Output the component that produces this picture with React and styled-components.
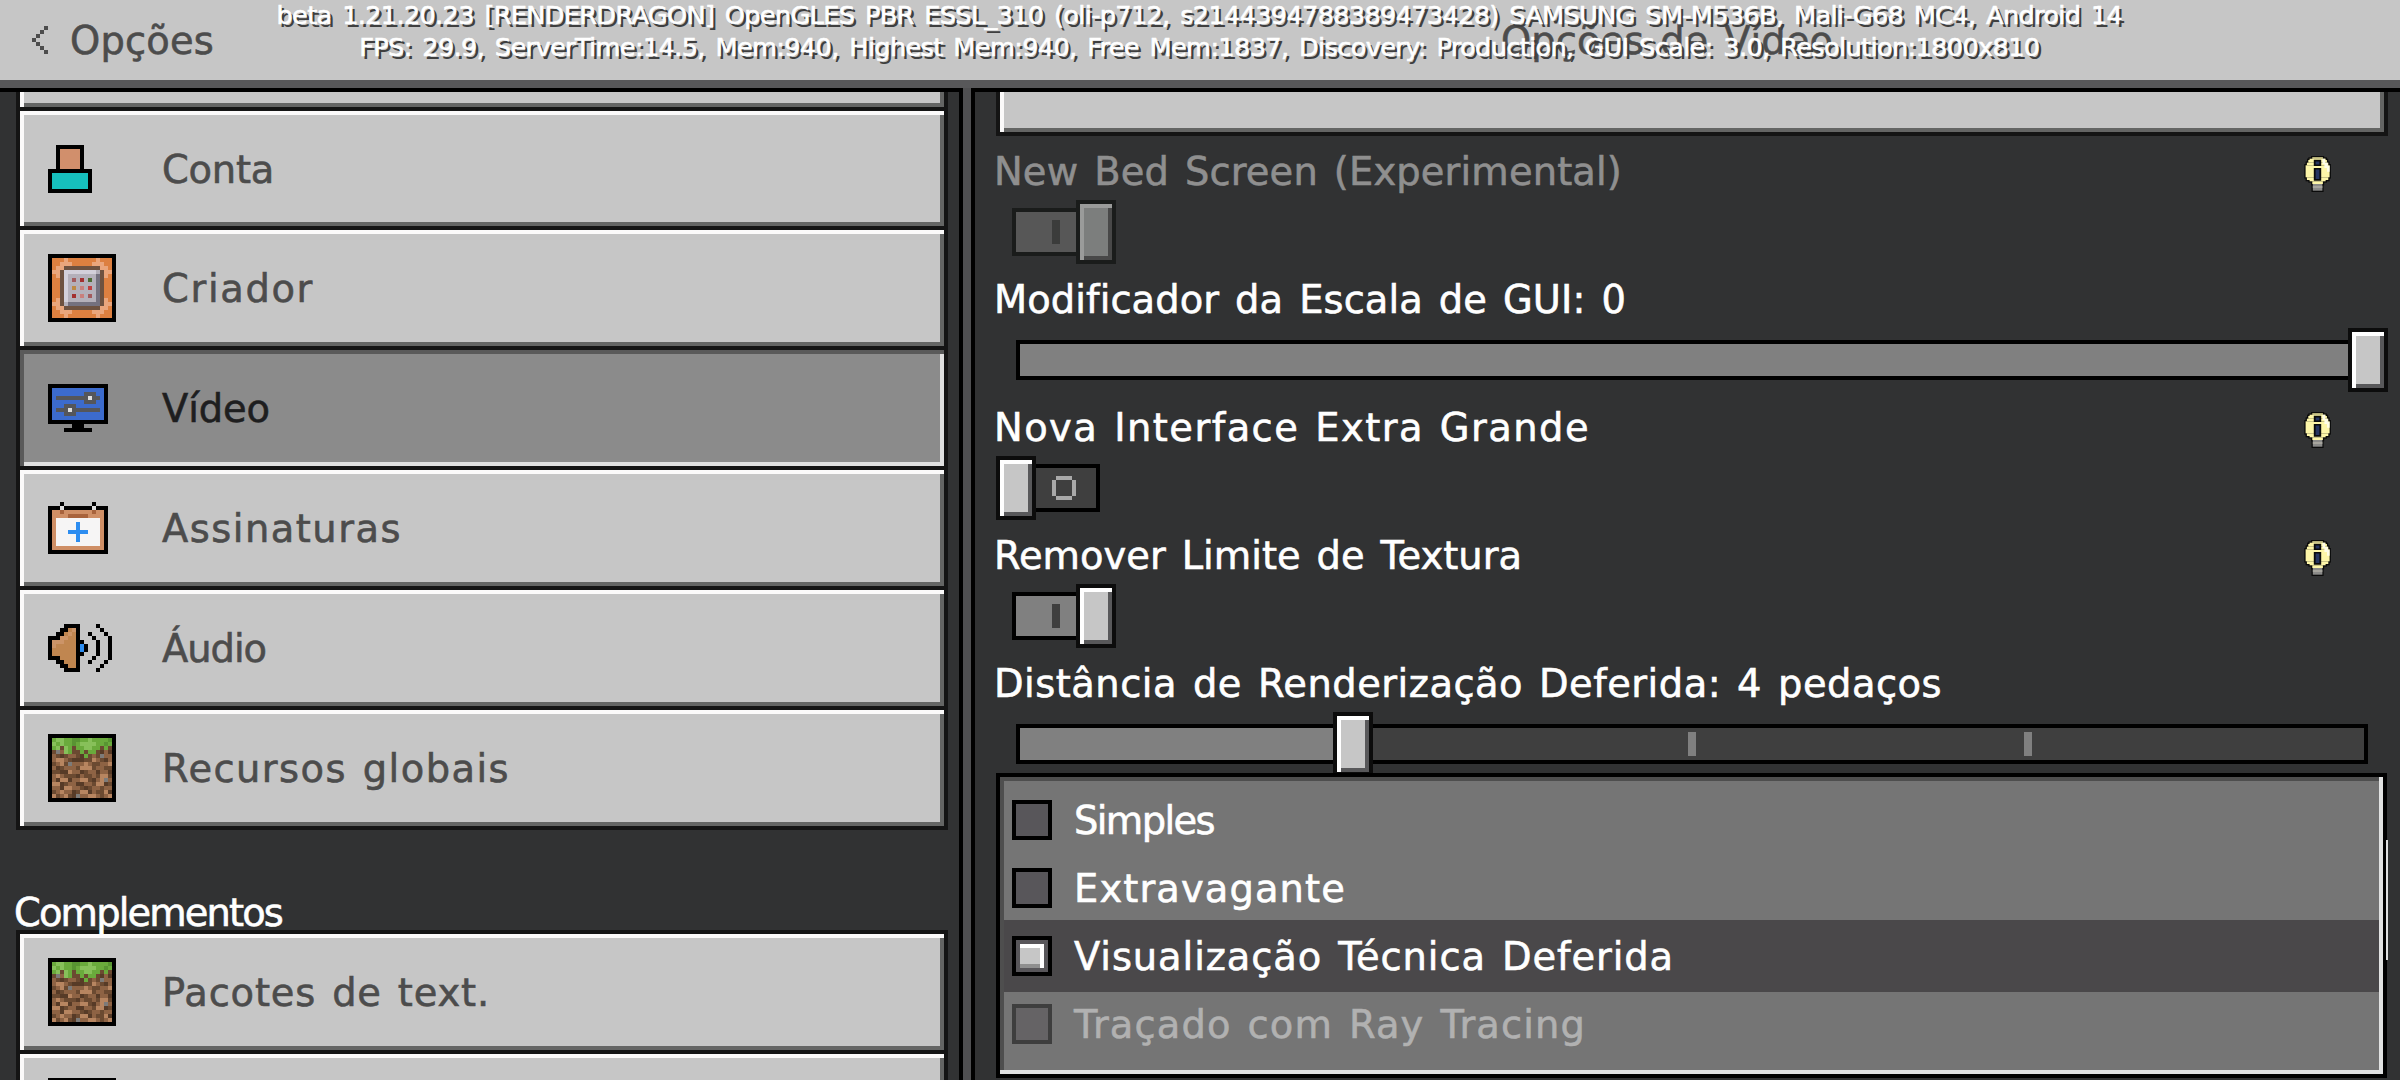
import React, { useLayoutEffect, useRef } from 'react'
import styled, { createGlobalStyle, css } from 'styled-components'

const GlobalStyle = createGlobalStyle`
  * {
    box-sizing: border-box;
  }
  body {
    margin: 0;
    background: #313233;
    font-family: 'DejaVu Sans', sans-serif;
    overflow: hidden;
  }
`

/* ---------- text ---------- */

// glyph advances of the game font, in font pixels. Everything else is 6 wide
const ADVANCES = {
  ' ': 4, i: 2, l: 3, t: 4, f: 5, k: 5, I: 4, 'í': 3,
  '.': 2, ',': 2, ':': 2, '[': 4, ']': 4, '(': 5, ')': 5,
}

const Label = styled.span`
  display: inline-block;
  justify-self: start;
  white-space: pre;
  margin-left: ${(props) => props.$unit * -0.5}px;
  padding-top: ${(props) => props.$unit * 0.5}px;
  font-size: ${(props) => props.$unit * 9.6}px;
  line-height: ${(props) => props.$unit * 10}px;
  color: ${(props) => props.color || '#fff'};
  -webkit-text-stroke: 0.6px ${(props) => props.color || '#fff'};
  ${(props) => props.$shadow && css`
    text-shadow: 2.67px 2.67px 0 #3f3f3f;
  `}
`

function GameText({ children, unit = 4, ...rest }) {
  const ref = useRef(null)

  useLayoutEffect(() => {
    const el = ref.current
    el.style.letterSpacing = '0px'
    el.style.wordSpacing = '0px'
    const chars = [...children]
    const spaces = chars.filter((c) => c === ' ').length
    const target = chars.reduce((sum, c) => sum + (ADVANCES[c] || 6), 0) * unit
    const natural = el.getBoundingClientRect().width
    const space = unit * 9.6 * 0.318
    const tracking =
      (target - natural - spaces * (4 * unit - space)) / (chars.length - spaces)
    el.style.letterSpacing = `${tracking}px`
    el.style.wordSpacing = `${4 * unit - space - tracking}px`
  }, [children, unit])

  return <Label ref={ref} $unit={unit} {...rest}>{children}</Label>
}

/* ---------- pixel icons ---------- */

const PALETTE = {
  K: '#000', S: '#d18f6c', T: '#16bfbd',
  O: '#dd8040', o: '#eaa67c', n: '#6e5240', L: '#d3d0da', M: '#b4b0ba', D: '#74717f',
  r: '#a33030', p: '#c97f7c', c: '#a25a5c', q: '#bf4040', v: '#4e6b35', y: '#bd8a44',
  B: '#3c6bcd', g: '#55565a', w: '#dedede',
  A: '#cf8f66', a: '#a8633c', W: '#f6f5f5', P: '#2d8df0', x: '#a9a9a9',
  C: '#c08650', H: '#cc9468',
  1: '#6aaa3c', 2: '#87c05a', 3: '#589432',
  4: '#8e6344', 5: '#6b4a31', 6: '#b78560', 7: '#573b27', 8: '#7d7b79',
}

const ACCOUNT = [
  '..KKKKKKK..',
  '..KSSSSSK..',
  '..KSSSSSK..',
  '..KSSSSSK..',
  '..KSSSSSK..',
  '..KSSSSSK..',
  'KKKKKKKKKKK',
  'KTTTTTTTTTK',
  'KTTTTTTTTTK',
  'KTTTTTTTTTK',
  'KTTTTTTTTTK',
  'KKKKKKKKKKK',
]

const CREATOR = [
  'KKKKKKKKKKKKKKKKK',
  'KOOOoOOOOOOOoOOOK',
  'KOOoooOOOOOoooOOK',
  'KOoonnnnnnnnnooOK',
  'KoonLLLLLLLLMnooK',
  'KOonLMMMMMMMDnoOK',
  'KOOnLMcMrMvMDnOOK',
  'KOOnLMMMMMMMDnOOK',
  'KOOnLMyMpMqMDnOOK',
  'KOOnLMMMMMMMDnOOK',
  'KOOnLMrMpMcMDnOOK',
  'KOonLMMMMMMMDnoOK',
  'KoonMDDDDDDDDnooK',
  'KOoonnnnnnnnnooOK',
  'KOOoooOOOOOoooOOK',
  'KOOOoOOOOOOOoOOOK',
  'KKKKKKKKKKKKKKKKK',
]

const VIDEO = [
  'KKKKKKKKKKKKKKK',
  'KBBBBBBBBBBBBBK',
  'KBBBBBBBBgggBBK',
  'KBggggggggwggBK',
  'KBBBBBBBBgggBBK',
  'KBBBgggBBBBBBBK',
  'KBgggwgggggggBK',
  'KBBBgggBBBBBBBK',
  'KBBBBBBBBBBBBBK',
  'KKKKKKKKKKKKKKK',
  '......KKK......',
  '....KKKKKKK....',
]

const CALENDAR = [
  '...K.......K...',
  'KKKwKKKKKKKwKKK',
  'KAAaAAAAAAAaAAK',
  'KAAAAaaaaaAAAAK',
  'KAWWWWWWWWWWWAK',
  'KAWWWWWPWWWWWAK',
  'KAWWWWWPWWWWWAK',
  'KAWWWPPPPPWWWAK',
  'KAWWWWWPWWWWWAK',
  'KAWWWWWPWWWWWAK',
  'KAWWWWWWWWWWWAK',
  'KAAAAAAAAAAAAAK',
  'KKKKKKKKKKKKKKK',
]

const AUDIO = [
  '....KKKK....K...',
  '...KKCHK.....K..',
  '..KKCHCK..K...K.',
  'KKKHHCCK...K...K',
  'KHHHCCCKK...K..K',
  'KHCCCCCKPK..K..K',
  'KCCCCCCKPK..K..K',
  'KCCCCCCKK...K..K',
  'KKKCCCCK...K...K',
  '..KKCCCK..K...K.',
  '...KKCCK.....K..',
  '....KKKK....K...',
]

const GRASS = [
  'KKKKKKKKKKKKKKKKK',
  'K122113311211113K',
  'K212113122221131K',
  'K125215112211515K',
  'K584215515115747K',
  'K457544571545844K',
  'K466457775564574K',
  'K546584446455446K',
  'K475444566654455K',
  'K557764475447447K',
  'K464555745545665K',
  'K476674466574684K',
  'K667544774456675K',
  'K447664457544544K',
  'K546447566745567K',
  'K654657844664546K',
  'KKKKKKKKKKKKKKKKK',
]

const PixelSvg = styled.svg`
  display: block;
  flex: none;
  shape-rendering: crispEdges;
`

function PixelIcon({ rows, unit = 4 }) {
  const w = rows[0].length
  const h = rows.length
  return (
    <PixelSvg width={w * unit} height={h * unit} viewBox={`0 0 ${w} ${h}`}>
      {rows.map((row, y) =>
        [...row].map((c, x) =>
          c === '.' ? null : (
            <rect key={`${x}-${y}`} x={x} y={y} width="1" height="1" fill={PALETTE[c]} />
          )
        )
      )}
    </PixelSvg>
  )
}

// [top, bottom, half width] slices of the bulb glass
const GLASS = [
  [1.3, 2.7, 5.3], [2.7, 4, 8], [4, 6.7, 9.3], [6.7, 9.3, 10.7],
  [9.3, 21.3, 12], [21.3, 24, 10.7], [24, 25.3, 8], [25.3, 28, 5.3],
]

function BulbIcon() {
  return (
    <svg width="28" height="36" viewBox="0 0 28 36">
      {GLASS.map(([top, bottom, half]) => (
        <rect key={top} x={12.3 - half} y={top - 1.3} width={half * 2 + 2.6} height={bottom - top + 2.6} fill="#0b0b0b" />
      ))}
      <path d="M7.500 27h12.100v9H7.500z" fill="#0b0b0b" />
      {GLASS.map(([top, bottom, half]) => (
        <rect key={top} x={13.6 - half} y={top} width={half * 2} height={bottom - top} fill="#fdf6a8" />
      ))}
      <path d="M18.500 2.700h2.600v4h2.700v3h1.800v6h-2.600V12h-2.600V8h-1.900z" fill="#fffde8" />
      <path d="M8.800 28h9.600v6.700H8.800z" fill="#8a8a88" />
      <path d="M8.800 30.200h9.600v1.600H8.800z" fill="#aeaca4" />
      <path d="M9.800 3.800h7.400V10H9.800zM9.800 12h7.400v12.700H9.800z" fill="#0b0b0b" />
      <path d="M11.600 5.500h3.800v3h-3.800zM11.600 13.600h3.800v9.500h-3.800z" fill="#263560" />
    </svg>
  )
}

/* ---------- header ---------- */

const Screen = styled.div`
  position: relative;
  display: flex;
  flex-direction: column;
  width: 2400px;
  height: 1080px;
  overflow: hidden;
  background: #313233;
`

const Header = styled.header`
  display: grid;
  grid-template-columns: 1503px 1fr;
  align-items: center;
  flex: none;
  height: 88px;
  background: #c6c6c6;
  border-bottom: 8px solid #58585a;
`

const BackButton = styled.div`
  display: flex;
  align-items: center;
  gap: 24px;
  padding-left: 32px;
`

// the debug lines float over the header
const DebugOverlay = styled.div`
  position: absolute;
  top: 1px;
  left: 0;
  width: 100%;
  display: flex;
  flex-direction: column;
  align-items: center;
  gap: 4px;
`

/* ---------- panes ---------- */

const Panes = styled.main`
  display: flex;
  gap: 8px;
  flex: 1;
  min-height: 0;
  background: #4f4f51;
`

const Sidebar = styled.nav`
  width: 963px;
  padding: 0 11px 0 16px;
  border: solid #000;
  border-width: 4px 4px 0 0;
  background: #313233;
  overflow: hidden;
`

const Content = styled.section`
  flex: 1;
  padding: 0 12px 0 21px;
  border: solid #000;
  border-width: 4px 0 0 4px;
  background: #313233;
  overflow: hidden;
`

const raised = css`
  background: #c6c6c6;
  box-shadow: inset 4px 4px #fbfafa, inset -4px -4px #646564;
`

const sunken = css`
  background: #8b8b8b;
  box-shadow: inset 4px 4px #5a5a5a, inset -4px -4px #e0e0e0;
`

const NavList = styled.div`
  display: flex;
  flex-direction: column;
  gap: 4px;
  width: 932px;
  padding: ${(props) => (props.$cut ? '0 4px 4px' : '4px')};
  background: #141414;
`

const NavRow = styled.div`
  display: flex;
  align-items: center;
  height: ${(props) => props.$height || 116}px;
  padding-left: 28px;
  ${(props) => (props.$active ? sunken : raised)}
`

const NavIcon = styled.div`
  width: 116px;
`

// end of an entry that is scrolled under the header
const CutRow = styled.div`
  height: ${(props) => props.$height}px;
  background: #c6c6c6;
  box-shadow: inset 4px 0 #fbfafa, inset -4px -4px #646564;
`

const SectionTitle = styled.div`
  height: 100px;
  padding-top: 61px;
`

/* ---------- options ---------- */

const CutButton = styled.div`
  width: 1392px;
  height: 44px;
  padding: 0 4px 4px;
  background: #141414;
`

const Option = styled.div`
  height: 128px;
`

const OptionHead = styled.div`
  display: flex;
  justify-content: space-between;
  height: 44px;
  padding-right: 56px;
`

const OptionList = styled.div`
  padding-top: 20px;
`

const OptionLabel = styled(GameText)`
  margin-top: -6px;
`

const Knob = styled.div`
  flex: none;
  width: 40px;
  height: 64px;
  border: 4px solid ${(props) => (props.$disabled ? '#1a1c1b' : '#0c0c0c')};
  background: ${(props) => (props.$disabled ? '#7c7e7d' : '#c6c6c6')};
  box-shadow: ${(props) =>
    props.$disabled
      ? 'inset 4px 4px #9a9b9a, inset -4px -4px #484848'
      : 'inset 4px 4px #fff, inset -4px -4px #58585a'};
`

const ToggleBox = styled.div`
  display: flex;
  align-items: center;
  padding-left: ${(props) => (props.$on ? 16 : 0)}px;
`

const ToggleTrack = styled.div`
  width: 64px;
  height: 48px;
  padding: 8px 0 0 ${(props) => (props.$on ? 36 : 16)}px;
  border: 4px solid ${(props) => (props.$disabled ? '#1a1c1b' : '#000')};
  border-width: ${(props) => (props.$on ? '4px 0 4px 4px' : '4px 4px 4px 0')};
  background: ${(props) => (props.$disabled ? '#575757' : props.$on ? '#808080' : '#3f3f3f')};
`

const OnMark = styled.div`
  width: 8px;
  height: 24px;
  background: ${(props) => (props.$disabled ? '#3b3c3b' : '#3f3f3f')};
`

const OFF_MARK = ['.xxxx.', 'x....x', 'x....x', 'x....x', 'x....x', '.xxxx.']

function Toggle({ on, disabled }) {
  return (
    <ToggleBox $on={on}>
      {!on && <Knob />}
      <ToggleTrack $on={on} $disabled={disabled}>
        {on ? <OnMark $disabled={disabled} /> : <PixelIcon rows={OFF_MARK} />}
      </ToggleTrack>
      {on && <Knob $disabled={disabled} />}
    </ToggleBox>
  )
}

const SliderBox = styled.div`
  display: flex;
  align-items: center;
  width: 1392px;
  height: 64px;
  padding: 0 20px;
`

const SliderTrack = styled.div`
  position: relative;
  width: 1352px;
  height: 40px;
  border: 4px solid #000;
  background: #3f3f3f;
`

const SliderFill = styled.div`
  height: 100%;
  background: #808080;
`

const SliderKnob = styled(Knob)`
  position: absolute;
  top: -16px;
`

const Tick = styled.div`
  position: absolute;
  top: 4px;
  width: 8px;
  height: 24px;
  background: #808080;
`

function Slider({ value, ticks = [] }) {
  return (
    <SliderBox>
      <SliderTrack>
        <SliderFill style={{ width: `${value * 100}%` }} />
        {ticks.map((t) => (
          <Tick key={t} style={{ left: `calc(${t * 100}% - 4px)` }} />
        ))}
        <SliderKnob style={{ left: `${Math.round(value * 1353 - 25)}px` }} />
      </SliderTrack>
    </SliderBox>
  )
}

/* ---------- graphics modes ---------- */

const RadioPanel = styled.div`
  position: relative;
  width: 1391px;
  height: 305px;
  margin-top: -23px;
  padding: 7px 4px 0;
  border: 4px solid #000;
  background: #757575;
  box-shadow: inset -4px -4px #e1e2e2, inset 4px 4px #4e4e4e;
`

const RadioRow = styled.div`
  display: flex;
  align-items: center;
  gap: 24px;
  height: 72px;
  margin-bottom: -4px;
  padding-left: 8px;
  background: ${(props) => (props.$selected ? '#4a484a' : 'transparent')};
`

const RadioBox = styled.div`
  width: 40px;
  height: 40px;
  padding: 4px;
  border: 4px solid ${(props) => (props.$disabled ? '#3e3e3e' : '#000')};
  background: ${(props) => (props.$disabled ? '#656365' : '#58565a')};
`

const RadioMark = styled.div`
  width: 24px;
  height: 24px;
  background: #c6c6c6;
  box-shadow: inset -4px 4px #fff, inset 0 -4px #8f8f8f;
`

const ScrollThumb = styled.div`
  position: absolute;
  top: 63px;
  right: -5px;
  width: 2px;
  height: 120px;
  background: #dfe0e1;
`

const MODES = [
  { name: 'Simples' },
  { name: 'Extravagante' },
  { name: 'Visualização Técnica Deferida', selected: true },
  { name: 'Traçado com Ray Tracing', disabled: true },
]

const GENERAL = [
  { name: 'Conta', icon: ACCOUNT, height: 115 },
  { name: 'Criador', icon: CREATOR },
  { name: 'Vídeo', icon: VIDEO, active: true },
  { name: 'Assinaturas', icon: CALENDAR },
  { name: 'Áudio', icon: AUDIO },
  { name: 'Recursos globais', icon: GRASS },
]

function NavItem({ name, icon, active, height }) {
  return (
    <NavRow $active={active} $height={height}>
      <NavIcon><PixelIcon rows={icon} /></NavIcon>
      {name && <GameText color={active ? '#1e1e1f' : '#4c4c4c'}>{name}</GameText>}
    </NavRow>
  )
}

function VideoOption({ label, hint, disabled, children }) {
  return (
    <Option>
      <OptionHead>
        <OptionLabel color={disabled ? '#8f8f8f' : '#fff'}>{label}</OptionLabel>
        {hint && <BulbIcon />}
      </OptionHead>
      {children}
    </Option>
  )
}

function App() {
  return (
    <Screen>
      <GlobalStyle />
      <Header>
        <BackButton>
          <svg width="16" height="28" viewBox="0 0 4 7" shapeRendering="crispEdges">
            <path d="M3 0h1v1h-1zM2 1h1v1h-1zM1 2h1v1h-1zM0 3h1v1h-1zM1 4h1v1h-1zM2 5h1v1h-1zM3 6h1v1h-1z" fill="#4c4c4c" />
          </svg>
          <GameText color="#4c4c4c">Opções</GameText>
        </BackButton>
        <GameText color="#4c4c4c">Opções de Vídeo</GameText>
      </Header>

      <Panes>
        <Sidebar>
          <NavList $cut>
            <CutRow $height={15} />
            {GENERAL.map((item) => (
              <NavItem key={item.name} {...item} />
            ))}
          </NavList>
          <SectionTitle>
            <GameText>Complementos</GameText>
          </SectionTitle>
          <NavList>
            <NavItem name="Pacotes de text." icon={GRASS} />
            <NavItem icon={GRASS} />
          </NavList>
        </Sidebar>

        <Content>
          <CutButton>
            <CutRow $height={40} />
          </CutButton>
          <OptionList>
            <VideoOption label="New Bed Screen (Experimental)" hint disabled>
              <Toggle on disabled />
            </VideoOption>
            <VideoOption label="Modificador da Escala de GUI: 0">
              <Slider value={1} />
            </VideoOption>
            <VideoOption label="Nova Interface Extra Grande" hint>
              <Toggle />
            </VideoOption>
            <VideoOption label="Remover Limite de Textura" hint>
              <Toggle on />
            </VideoOption>
            <VideoOption label="Distância de Renderização Deferida: 4 pedaços">
              <Slider value={0.25} ticks={[0.5, 0.75]} />
            </VideoOption>
          </OptionList>
          <RadioPanel>
            {MODES.map((mode) => (
              <RadioRow key={mode.name} $selected={mode.selected}>
                <RadioBox $disabled={mode.disabled}>
                  {mode.selected && <RadioMark />}
                </RadioBox>
                <GameText color={mode.disabled ? '#b1b1b1' : '#fff'}>{mode.name}</GameText>
              </RadioRow>
            ))}
            <ScrollThumb />
          </RadioPanel>
        </Content>
      </Panes>

      <DebugOverlay>
        <GameText unit={2.667} $shadow>
          beta 1.21.20.23 [RENDERDRAGON] OpenGLES PBR ESSL_310 (oli-p712, s2144394788389473428) SAMSUNG SM-M536B, Mali-G68 MC4, Android 14
        </GameText>
        <GameText unit={2.667} $shadow>
          FPS: 29.9, ServerTime:14.5, Mem:940, Highest Mem:940, Free Mem:1837, Discovery: Production, GUI Scale: 3.0, Resolution:1800x810
        </GameText>
      </DebugOverlay>
    </Screen>
  )
}

export default App
